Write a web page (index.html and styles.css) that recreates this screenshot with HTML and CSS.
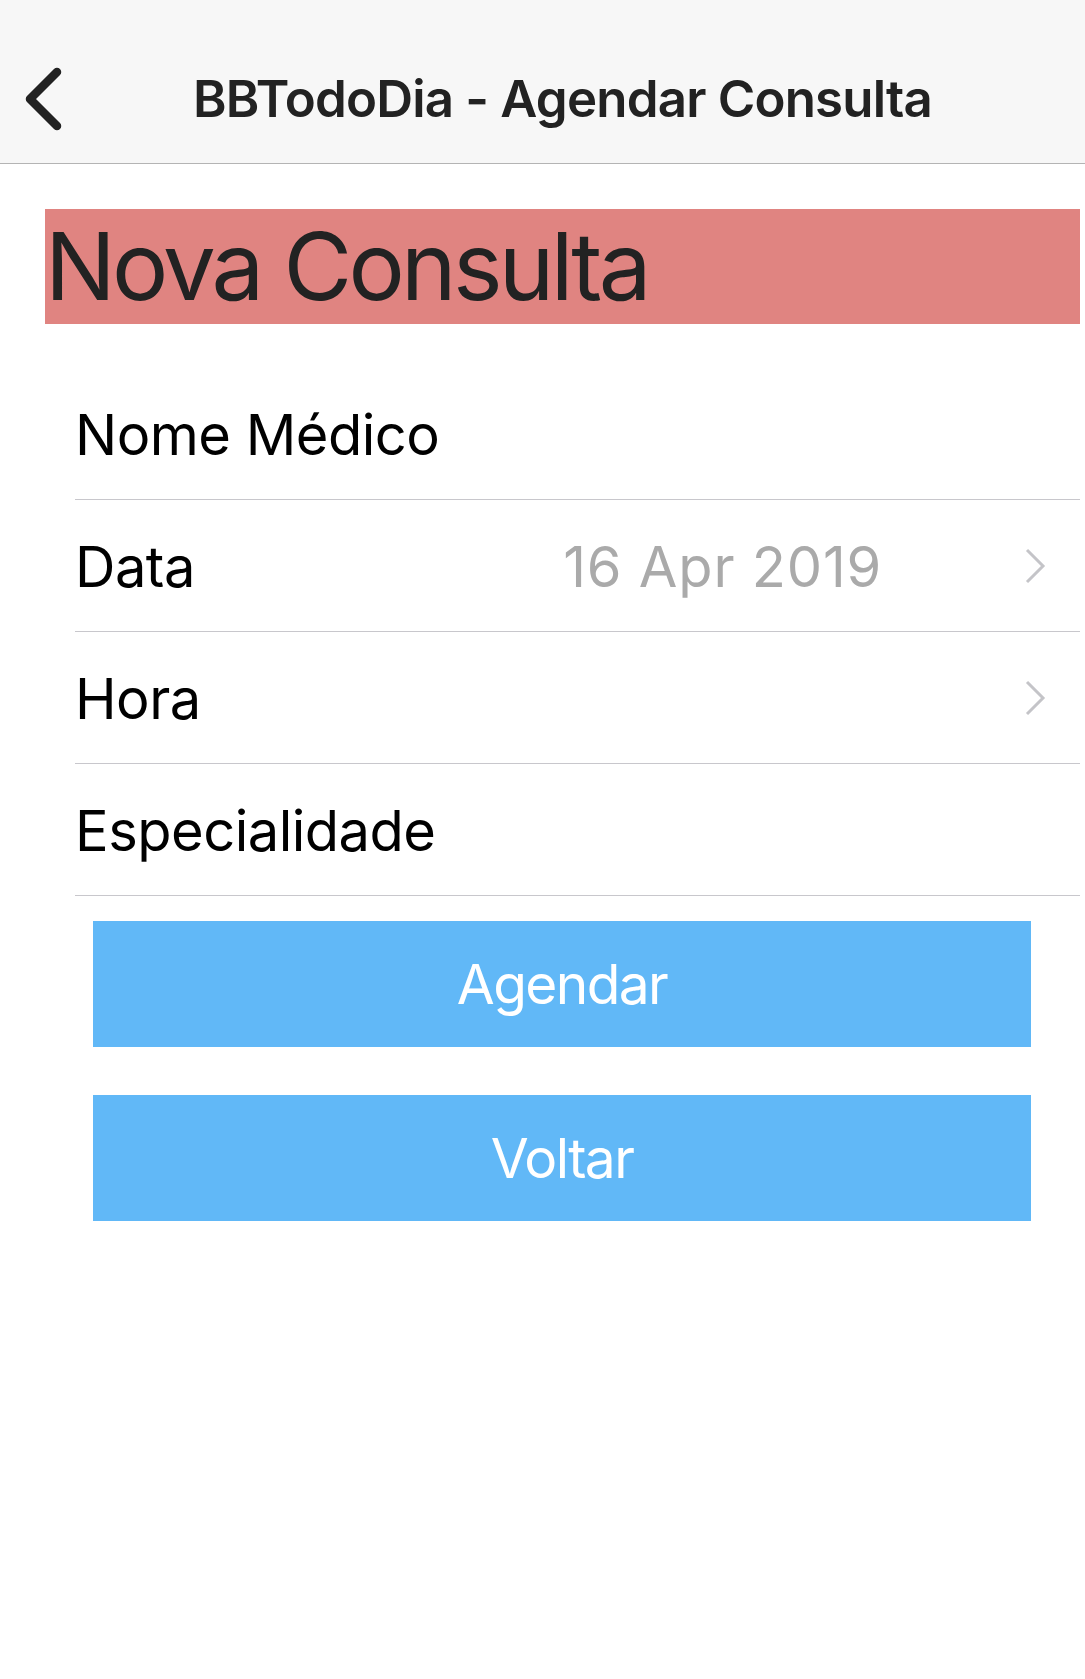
FILE: index.html
```html
<!DOCTYPE html>
<html lang="pt">
<head>
<meta charset="utf-8">
<title>BBTodoDia - Agendar Consulta</title>
<link rel="stylesheet" href="styles.css">
</head>
<body>
<header class="navbar">
  <div class="back">
    <svg class="back-icon" width="40" height="64" viewBox="0 0 40 64">
      <polyline points="32,5 5,32 32,59" fill="none" stroke="#222" stroke-width="8.5" stroke-linecap="round" stroke-linejoin="round"/>
    </svg>
  </div>
  <h1 class="nav-title">BBTodoDia - Agendar Consulta</h1>
</header>
<main class="content">
  <div class="banner">Nova Consulta</div>
  <ul class="form">
    <li class="row"><span class="label">Nome Médico</span></li>
    <li class="row"><span class="label">Data</span><span class="value">16 Apr 2019</span><svg class="chev" width="22" height="36" viewBox="0 0 22 36"><polyline points="3,2 19,18 3,34" fill="none" stroke="#c4c4c8" stroke-width="3"/></svg></li>
    <li class="row"><span class="label">Hora</span><span class="value"></span><svg class="chev" width="22" height="36" viewBox="0 0 22 36"><polyline points="3,2 19,18 3,34" fill="none" stroke="#c4c4c8" stroke-width="3"/></svg></li>
    <li class="row"><span class="label">Especialidade</span></li>
  </ul>
  <div class="actions">
    <button class="btn">Agendar</button>
    <button class="btn">Voltar</button>
  </div>
</main>
</body>
</html>
```
FILE: styles.css
```css
* { box-sizing: border-box; }
body {
  margin: 0;
  background: #fff;
  font-family: Inter, "Noto Sans", sans-serif;
  color: #000;
}
.navbar {
  height: 164px;
  padding-top: 34px;
  background: #f7f7f7;
  border-bottom: 1px solid #b4b4b4;
  display: flex;
  align-items: center;
}
.back {
  width: 95px;
  padding-left: 25px;
  display: flex;
  align-items: center;
}
.back-icon { display: block; }
.nav-title {
  flex: 1;
  margin: 0;
  padding-right: 55px;
  text-align: center;
  font-size: 51px;
  font-weight: 600;
  color: #222;
  letter-spacing: -0.8px;
}
.content { display: flex; flex-direction: column; }
.banner {
  margin: 45px 5px 0 45px;
  height: 115px;
  background: #e08481;
  color: #222;
  font-size: 94px;
  line-height: 115px;
  letter-spacing: -3.7px;
  white-space: nowrap;
}
.form {
  list-style: none;
  margin: 44px 5px 0 75px;
  padding: 0;
}
.row {
  height: 132px;
  border-bottom: 1px solid #c8c7cc;
  display: flex;
  align-items: center;
  padding-top: 3px;
  padding-right: 34px;
  font-size: 56px;
}
.label { flex: 1; letter-spacing: -0.5px; }
.value { color: #aaaaaa; margin-right: 142px; letter-spacing: 0.8px; }
.chev { display: block; margin-top: -3px; }
.actions {
  display: flex;
  flex-direction: column;
  gap: 48px;
  margin: 25px 54px 0 93px;
}
.btn {
  height: 126px;
  border: 0;
  background: #61b8f7;
  color: #fff;
  font-family: inherit;
  font-size: 55px;
  letter-spacing: -1.6px;
  padding: 0;
}
```
